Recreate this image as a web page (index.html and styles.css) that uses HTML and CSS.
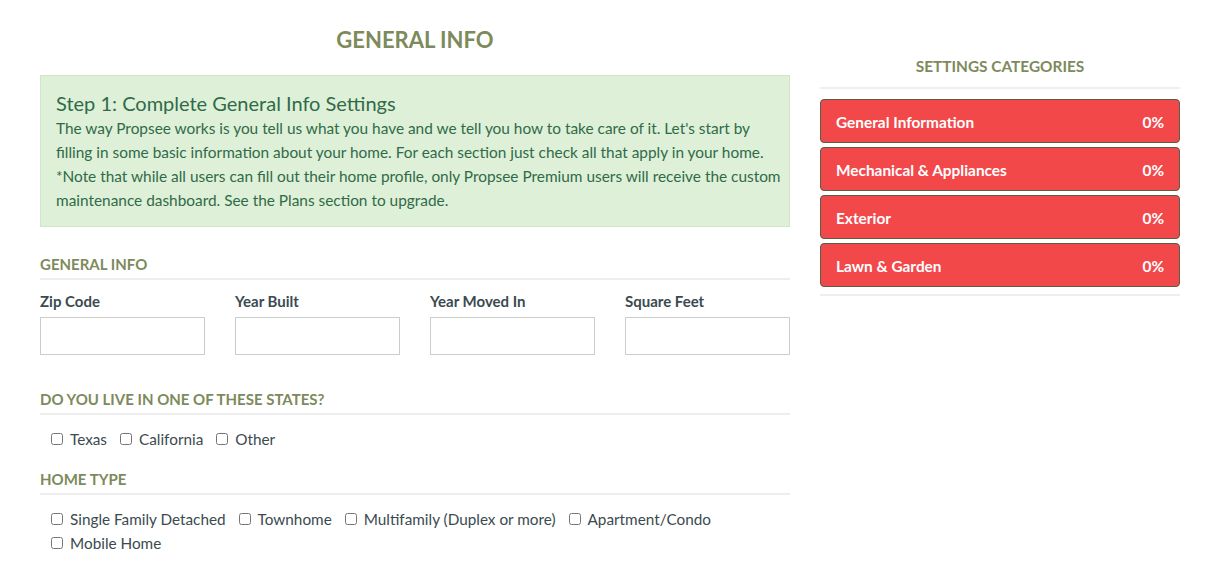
FILE: index.html
```html
<!DOCTYPE html>
<html lang="en">
<head>
    <meta charset="UTF-8">
    <title>Home Settings</title>
    <link rel="stylesheet" href="styles.css">
</head>
<body>
    <div class="page">

        <!-- Main settings column -->
        <div class="main-col">
            <h1 class="page-title">GENERAL INFO</h1>

            <div class="step-box">
                <h2>Step 1: Complete General Info Settings</h2>
                <p>The way Propsee works is you tell us what you have and we tell you how to take care of it. Let's start by filling in some basic information about your home. For each section just check all that apply in your home. *Note that while all users can fill out their home profile, only Propsee Premium users will receive the custom maintenance dashboard. See the Plans section to upgrade.</p>
            </div>

            <h3 class="section-title">GENERAL INFO</h3>
            <div class="field-row">
                <div class="field">
                    <label for="zip">Zip Code</label>
                    <input type="text" id="zip">
                </div>
                <div class="field">
                    <label for="built">Year Built</label>
                    <input type="text" id="built">
                </div>
                <div class="field">
                    <label for="moved">Year Moved In</label>
                    <input type="text" id="moved">
                </div>
                <div class="field">
                    <label for="sqft">Square Feet</label>
                    <input type="text" id="sqft">
                </div>
            </div>

            <h3 class="section-title">DO YOU LIVE IN ONE OF THESE STATES?</h3>
            <div class="check-list">
                <label class="check"><input type="checkbox"> Texas</label>
                <label class="check"><input type="checkbox"> California</label>
                <label class="check"><input type="checkbox"> Other</label>
            </div>

            <h3 class="section-title">HOME TYPE</h3>
            <div class="check-list">
                <label class="check"><input type="checkbox"> Single Family Detached</label>
                <label class="check"><input type="checkbox"> Townhome</label>
                <label class="check"><input type="checkbox"> Multifamily (Duplex or more)</label>
                <label class="check"><input type="checkbox"> Apartment/Condo</label>
                <label class="check"><input type="checkbox"> Mobile Home</label>
            </div>
        </div>

        <!-- Sidebar -->
        <div class="side-col">
            <h3 class="side-title">SETTINGS CATEGORIES</h3>
            <div class="cat-list">
                <a class="cat-btn" href="#"><span>General Information</span><span>0%</span></a>
                <a class="cat-btn" href="#"><span>Mechanical &amp; Appliances</span><span>0%</span></a>
                <a class="cat-btn" href="#"><span>Exterior</span><span>0%</span></a>
                <a class="cat-btn" href="#"><span>Lawn &amp; Garden</span><span>0%</span></a>
            </div>
        </div>

    </div>
</body>
</html>
```

FILE: styles.css
```css
body {
    margin: 0;
    font-family: Lato, "Liberation Sans", sans-serif;
    color: #3b4a50;
    background: #fff;
}
.page {
    display: flex;
    gap: 30px;
    padding: 0 31px 0 40px;
}
.main-col {
    width: 750px;
}
.side-col {
    width: 360px;
    padding-top: 55px;
}
.page-title {
    margin: 26px 0 21px;
    text-align: center;
    font-size: 22px;
    line-height: 28px;
    color: #7d8a5c;
}
.step-box {
    background-color: #dff0d8;
    border: 1px solid #d0e6c4;
    padding: 14px 6px 14px 15px;
    color: #2f6b48;
}
.step-box h2 {
    margin: 0;
    font-size: 20px;
    font-weight: normal;
    line-height: 26px;
}
.step-box p {
    margin: 0;
    font-size: 15.4px;
    line-height: 24px;
}
.section-title {
    margin: 0;
    padding-bottom: 4px;
    border-bottom: 2px solid #eeeeee;
    font-size: 15px;
    line-height: 20px;
    color: #7d8a5c;
}
.main-col .step-box + .section-title {
    margin-top: 27px;
}
.field-row {
    display: grid;
    grid-template-columns: repeat(4, 1fr);
    gap: 30px;
    margin: 11px 0 34px;
}
.field label {
    display: block;
    font-weight: bold;
    font-size: 15px;
    line-height: 20px;
    margin-bottom: 6px;
}
.field input {
    box-sizing: border-box;
    width: 100%;
    height: 38px;
    border: 1px solid #cccccc;
    border-radius: 0;
}
.check-list {
    display: flex;
    flex-wrap: wrap;
    column-gap: 12px;
    padding: 12px 0 0 10px;
    margin-bottom: 18px;
}
.check {
    display: flex;
    align-items: center;
    font-size: 15.3px;
    line-height: 24px;
    color: #3b4a50;
}
.check input {
    margin: 0 7px 0 1px;
    width: 12px;
    height: 12px;
}
.side-title {
    margin: 0;
    padding-bottom: 10px;
    border-bottom: 2px solid #eeeeee;
    text-align: center;
    font-size: 15.4px;
    line-height: 22px;
    color: #7d8a5c;
}
.cat-list {
    display: flex;
    flex-direction: column;
    gap: 4px;
    padding: 10px 0 7px;
    border-bottom: 2px solid #eeeeee;
}
.cat-btn {
    display: flex;
    justify-content: space-between;
    align-items: center;
    height: 44px;
    box-sizing: border-box;
    padding: 1px 15px 0;
    background-color: #f2484a;
    border: 1px solid #5b5e44;
    border-radius: 4px;
    color: white;
    font-weight: bold;
    font-size: 15.4px;
    text-decoration: none;
}
```
